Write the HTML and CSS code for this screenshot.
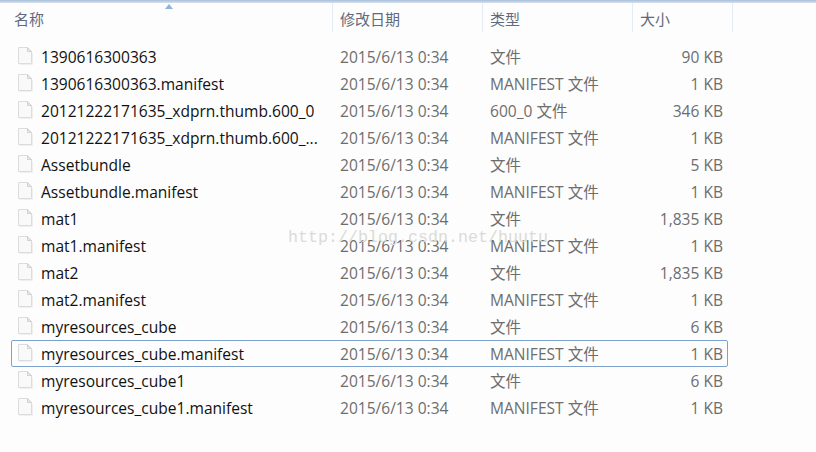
FILE: index.html
```html
<!DOCTYPE html>
<html lang="zh">
<head>
  <meta charset="UTF-8">
  <title>文件列表</title>
  <link rel="stylesheet" href="styles.css">
</head>
<body>
  <svg class="defs">
    <symbol id="file" viewBox="0 0 16 19">
      <path d="M1.5 1.5H10.5L14.5 5.5V17.5H1.5Z" fill="#f9f9f9" stroke="#dcdcdc"/>
      <path d="M10.5 1.5V5.5H14.5Z" fill="#e8e8e8" stroke="#d2d2d2"/>
      <path d="M2.5 18.5H15.5V7" fill="none" stroke="#efefef"/>
    </symbol>
  </svg>
  <div class="top-line"></div>
  <div class="header">
    <div class="col-name head-cell">名称<span class="sort-arrow"></span></div>
    <div class="head-cell">修改日期</div>
    <div class="head-cell">类型</div>
    <div class="head-cell">大小</div>
  </div>
  <div class="list">
    <div class="row"><div class="name"><svg class="file-icon"><use href="#file"/></svg>1390616300363</div><div class="date">2015/6/13 0:34</div><div class="type">文件</div><div class="size">90 KB</div></div>
    <div class="row"><div class="name"><svg class="file-icon"><use href="#file"/></svg>1390616300363.manifest</div><div class="date">2015/6/13 0:34</div><div class="type">MANIFEST 文件</div><div class="size">1 KB</div></div>
    <div class="row"><div class="name"><svg class="file-icon"><use href="#file"/></svg>20121222171635_xdprn.thumb.600_0</div><div class="date">2015/6/13 0:34</div><div class="type">600_0 文件</div><div class="size">346 KB</div></div>
    <div class="row"><div class="name"><svg class="file-icon"><use href="#file"/></svg>20121222171635_xdprn.thumb.600_...</div><div class="date">2015/6/13 0:34</div><div class="type">MANIFEST 文件</div><div class="size">1 KB</div></div>
    <div class="row"><div class="name"><svg class="file-icon"><use href="#file"/></svg>Assetbundle</div><div class="date">2015/6/13 0:34</div><div class="type">文件</div><div class="size">5 KB</div></div>
    <div class="row"><div class="name"><svg class="file-icon"><use href="#file"/></svg>Assetbundle.manifest</div><div class="date">2015/6/13 0:34</div><div class="type">MANIFEST 文件</div><div class="size">1 KB</div></div>
    <div class="row"><div class="name"><svg class="file-icon"><use href="#file"/></svg>mat1</div><div class="date">2015/6/13 0:34</div><div class="type">文件</div><div class="size">1,835 KB</div></div>
    <div class="row"><div class="name"><svg class="file-icon"><use href="#file"/></svg>mat1.manifest</div><div class="date">2015/6/13 0:34</div><div class="type">MANIFEST 文件</div><div class="size">1 KB</div></div>
    <div class="row"><div class="name"><svg class="file-icon"><use href="#file"/></svg>mat2</div><div class="date">2015/6/13 0:34</div><div class="type">文件</div><div class="size">1,835 KB</div></div>
    <div class="row"><div class="name"><svg class="file-icon"><use href="#file"/></svg>mat2.manifest</div><div class="date">2015/6/13 0:34</div><div class="type">MANIFEST 文件</div><div class="size">1 KB</div></div>
    <div class="row"><div class="name"><svg class="file-icon"><use href="#file"/></svg>myresources_cube</div><div class="date">2015/6/13 0:34</div><div class="type">文件</div><div class="size">6 KB</div></div>
    <div class="row selected"><div class="name"><svg class="file-icon"><use href="#file"/></svg>myresources_cube.manifest</div><div class="date">2015/6/13 0:34</div><div class="type">MANIFEST 文件</div><div class="size">1 KB</div></div>
    <div class="row"><div class="name"><svg class="file-icon"><use href="#file"/></svg>myresources_cube1</div><div class="date">2015/6/13 0:34</div><div class="type">文件</div><div class="size">6 KB</div></div>
    <div class="row"><div class="name"><svg class="file-icon"><use href="#file"/></svg>myresources_cube1.manifest</div><div class="date">2015/6/13 0:34</div><div class="type">MANIFEST 文件</div><div class="size">1 KB</div></div>
  </div>
  <div class="watermark">http://blog.csdn.net/huutu</div>
</body>
</html>
```

FILE: styles.css
```css
:root {
  --head: #5f6b7c;
  --meta: #6d6d6d;
  --select: #7da2ce;
}
html, body {
  margin: 0;
  height: 100%;
  overflow: hidden;
}
body {
  position: relative;
  background: #fdfdfd;
  color: #111;
  font-family: "Open Sans", "Noto Sans", "Noto Sans CJK SC", sans-serif;
  font-size: 15.55px;
}
.defs {
  display: none;
}
.top-line {
  height: 3px;
  background: linear-gradient(#a9bfd9, #d5e1ee);
}
.header {
  display: grid;
  grid-template-columns: 333px 150px 150px 100px;
  width: 733px;
  height: 29px;
  font-size: 15px;
  color: var(--head);
}
.head-cell {
  position: relative;
  padding: 4px 0 0 7px;
  line-height: 24px;
  border-right: 1px solid #e3ebf3;
  box-sizing: border-box;
}
.col-name {
  padding-left: 14px;
}
.sort-arrow {
  position: absolute;
  left: 165px;
  top: 1px;
  border-left: 4.5px solid transparent;
  border-right: 4.5px solid transparent;
  border-bottom: 5px solid #8fb4d6;
}
.list {
  padding: 11px 0 0 11px;
  width: 717px;
}
.row {
  display: grid;
  grid-template-columns: 321px 150px 150px 90px;
  height: 27px;
  line-height: 25px;
  box-sizing: border-box;
  border: 1px solid transparent;
  border-radius: 2px;
}
.row > div {
  padding-top: 1px;
  white-space: nowrap;
  box-sizing: border-box;
  height: 25px;
}
.row.selected {
  border-color: var(--select);
}
.name {
  display: flex;
  align-items: flex-start;
  gap: 8px;
  padding-left: 5px;
}
.file-icon {
  width: 16px;
  height: 19px;
  margin-top: 1px;
  flex: none;
}
.date, .type, .size {
  color: var(--meta);
}
.date, .type {
  padding-left: 7px;
}
.size {
  text-align: right;
}
.watermark {
  position: absolute;
  left: 288px;
  top: 228px;
  font-family: "Liberation Mono", monospace;
  font-size: 16.67px;
  line-height: 20px;
  color: #dcdbd3;
}
```
